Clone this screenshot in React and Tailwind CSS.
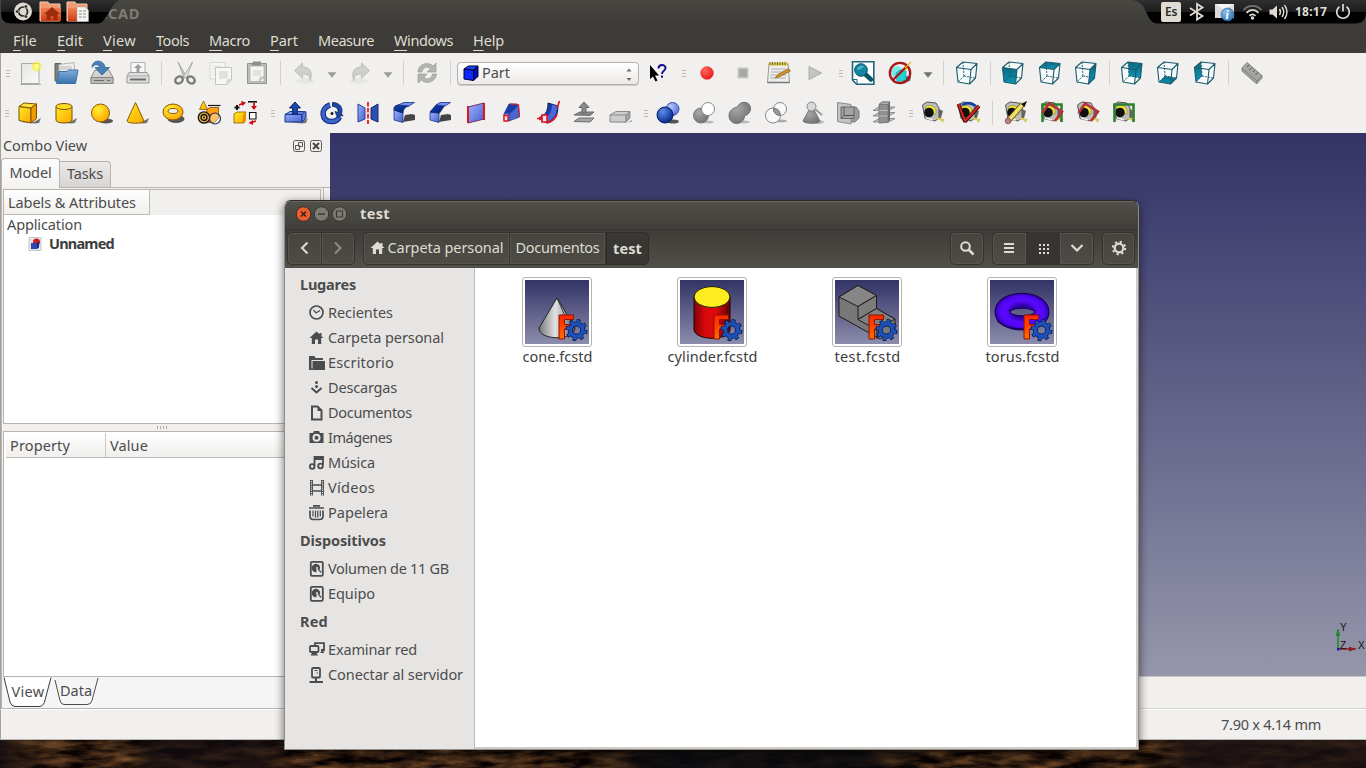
import { useLayoutEffect, useRef } from "react";

/* Text set to a fixed advance width by spreading its letters evenly. */
function Fit({ w, pad = "pb-0.5", className = "", children }) {
  const ref = useRef(null);
  useLayoutEffect(() => {
    const el = ref.current;
    el.style.letterSpacing = "0px";
    const natural = el.getBoundingClientRect().width;
    el.style.letterSpacing = (w - natural) / el.textContent.length + "px";
  }, [w]);
  return (
    <span ref={ref} className={"inline-block shrink-0 whitespace-pre " + pad + " " + className}>
      {children}
    </span>
  );
}

function Svg({ children, s = 24, className = "" }) {
  return (
    <svg width={s} height={s} viewBox={`0 0 ${s} ${s}`} className={"block shrink-0 overflow-visible " + className} fill="none">
      {children}
    </svg>
  );
}

function Defs() {
  const lin = (id, a, b, x2 = 0, y2 = 1) => (
    <linearGradient id={id} x1="0" y1="0" x2={x2} y2={y2}>
      <stop offset="0" stopColor={a} />
      <stop offset="1" stopColor={b} />
    </linearGradient>
  );
  const rad = (id, a, b) => (
    <radialGradient id={id} cx="0.35" cy="0.3" r="0.8">
      <stop offset="0" stopColor={a} />
      <stop offset="1" stopColor={b} />
    </radialGradient>
  );
  return (
    <svg width="0" height="0" className="absolute">
      <defs>
        {lin("yel", "#ffee20", "#ffa400", 1, 1)}
        {lin("blu", "#9db4ff", "#4560cc", 1, 1)}
        {lin("dbl", "#1344b8", "#001c66", 1, 1)}
        {lin("pap", "#e4e4e2", "#fafafa", 1, 1)}
        {lin("teal", "#0a6b84", "#0f93b3")}
        {lin("sky", "#333366", "#8c8cac")}
        {lin("fold", "#7faedb", "#3a72ad")}
        {lin("org", "#f08050", "#cf3c14")}
        {lin("fred", "#ff2400", "#ff6a00")}
        {rad("yb", "#fff030", "#ff9f00")}
        {rad("bb", "#5c8cf0", "#00207a")}
        {rad("lb", "#b8c6ff", "#5068d8")}
        {rad("gb", "#a8a8a8", "#6e6e6e")}
        {rad("rec", "#ff6a5c", "#e60e14")}
        {rad("info", "#8fc0ea", "#2c72b4")}
        <linearGradient id="coneg" x1="0" x2="1" y1="0" y2="0">
          <stop offset="0" stopColor="#777" />
          <stop offset="0.45" stopColor="#e2e2e2" />
          <stop offset="0.65" stopColor="#b8b8b8" />
          <stop offset="1" stopColor="#555" />
        </linearGradient>
        <linearGradient id="cylg" x1="0" x2="1" y1="0" y2="0">
          <stop offset="0" stopColor="#7c0408" />
          <stop offset="0.3" stopColor="#d8080c" />
          <stop offset="0.6" stopColor="#e0080c" />
          <stop offset="1" stopColor="#5c0406" />
        </linearGradient>
        <radialGradient id="tor" cx="0.5" cy="0.5" r="0.5">
          <stop offset="0.3" stopColor="#2c009c" />
          <stop offset="0.6" stopColor="#5a08ff" />
          <stop offset="0.85" stopColor="#5006f0" />
          <stop offset="1" stopColor="#2c009c" />
        </radialGradient>
        <linearGradient id="tray" x1="0" x2="0" y1="0" y2="1">
          <stop offset="0" stopColor="#2f2f2f" />
          <stop offset="0.5" stopColor="#1c1c1c" />
          <stop offset="0.52" stopColor="#000" />
          <stop offset="1" stopColor="#000" />
        </linearGradient>
      </defs>
    </svg>
  );
}

const Shadow = () => <path d="M4 21 H17 L24 17 L22 22 L18 22.5Z" fill="#555" opacity="0.8" />;

/* ---------- first toolbar ---------- */
const NewDoc = () => (
  <Svg>
    <path d="M3.500 2.5H21V22.5H3.500Z" fill="url(#pap)" stroke="#a9a9a6" />
    <path d="M2 23.5H23" stroke="#8a8a88" opacity=".7" />
    <circle cx="18.500" cy="5.5" r="5" fill="#f5ee20" opacity=".6" />
    <circle cx="18.500" cy="5.5" r="2.7" fill="#fff78a" />
  </Svg>
);
const OpenIcon = () => (
  <Svg>
    <path d="M1 2.5H7L8.5 4.5H19V20H1Z" fill="#7d7f7c" stroke="#5f615e" />
    <path d="M5 3.5L20 1.5L21 12H5Z" fill="#eee" stroke="#b5b5b3" />
    <path d="M6 6H18M6 8H18" stroke="#bbb" />
    <path d="M5 10.5H13L14.5 9H24L21.5 22.5H2.5Z" fill="url(#fold)" stroke="#3c6ea5" />
  </Svg>
);
const SaveIcon = () => (
  <Svg>
    <path d="M5 9H19L23 16.5V22.5H1V16.5Z" fill="#d2d2d0" stroke="#8f8f8d" />
    <path d="M1 16.5H23V22.5H1Z" fill="#b9b9b7" stroke="#888886" />
    <path d="M4 19.5H14M17 19.5H20" stroke="#6c6c6a" />
    <path d="M2 6.500C2 -2 14 -2 15 6.500H19.500L12 14L5 6.500H9.500C9 3 4 2.500 2 6.500Z" fill="#4a80b8" stroke="#2d5f96" strokeWidth=".8" />
  </Svg>
);
const PrintIcon = () => (
  <Svg>
    <path d="M5 11V1.5H19V11" fill="#f6f6f6" stroke="#b0b0ae" />
    <path d="M3 11.5H21L23 15V22H1V15Z" fill="#dededc" stroke="#999" />
    <path d="M1.5 15H22.5" stroke="#aaa" />
    <path d="M4 17.5H20V19.500H4Z" fill="#6c6c6a" />
    <path d="M12 3L16 7H13.5V11H10.5V7H8Z" fill="#9c9c9a" />
  </Svg>
);
const CutIcon = () => (
  <Svg>
    <path d="M5 1L13.5 15.5L11 17Z" fill="#c6c6c4" stroke="#999" strokeWidth=".7" />
    <path d="M19.5 1L10.5 15.5L13.5 17Z" fill="#e2e2e0" stroke="#999" strokeWidth=".7" />
    <ellipse cx="6" cy="19" rx="4" ry="3.2" transform="rotate(-35 6 19)" stroke="#7b7b79" strokeWidth="2.4" />
    <ellipse cx="18" cy="19" rx="4" ry="3.2" transform="rotate(35 18 19)" stroke="#7b7b79" strokeWidth="2.4" />
  </Svg>
);
const CopyIcon = () => (
  <Svg>
    <path d="M1 1.5H16V18H1Z" fill="#f6f6f5" stroke="#d4d4d2" />
    <path d="M3.5 5H13M3.5 8H6M3.5 11H6M3.5 14H6" stroke="#dcdcda" />
    <path d="M6.5 6.5H22.5V19L18 23.5H6.5Z" fill="#f6f6f5" stroke="#c4c4c2" />
    <path d="M10 10H19V17L16 18H10Z" fill="#e0e0de" />
    <path d="M17 23.5L18 18.5L23 17.5Z" fill="#d0d0ce" />
  </Svg>
);
const PasteIcon = () => (
  <Svg>
    <path d="M2.5 2.5H21.5V22.5H2.5Z" fill="#bdbdbb" stroke="#939391" />
    <path d="M5 5H19V20.5H5Z" fill="#f4f4f3" stroke="#aaa" strokeWidth=".7" />
    <path d="M8 .5H16V4.5H6.5Z" fill="#8d8d8b" />
    <path d="M8 9H16V15H8Z" fill="#e2e2e0" />
    <path d="M14 21L15 16.5L19.5 15.5Z" fill="#cacac8" stroke="#aaa" strokeWidth=".5" />
  </Svg>
);
const UndoIcon = ({ flip }) => (
  <Svg>
    <g transform={flip ? "translate(24 0) scale(-1 1)" : undefined}>
      <ellipse cx="13" cy="20" rx="9" ry="3" fill="#e6e6e4" />
      <path d="M2.5 9.5L10.5 2V6C17.5 6 21.5 11 18 19.5C18 14.5 15 12.5 10.5 13V17Z" fill="#cfcfcd" stroke="#bdbdbb" />
    </g>
  </Svg>
);
const RefreshIcon = () => (
  <Svg>
    <path d="M3 11C3 3 13 0 18 5L21 2V11H12L15.5 7.5C12 5 8 6 7 11Z" fill="#b4b4b2" stroke="#9c9c9a" strokeWidth=".7" />
    <path d="M21.5 13C21 21 11 24 6.5 19L3 22V13H12L9 16.5C12 19 16.5 18 17.5 13Z" fill="#b4b4b2" stroke="#9c9c9a" strokeWidth=".7" />
  </Svg>
);
const Caret = ({ c = "#9c9c9a" }) => (
  <Svg s={12}><path d="M2 4.5H10L6 9.5Z" fill={c} stroke={c} strokeWidth=".5" /></Svg>
);
const WhatsThis = () => (
  <Svg>
    <path d="M4 4V18L7 15.500L9.500 20.500L11.500 19.500L9 14.500H13Z" fill="#000" />
    <path d="M12.500 7.500C12.500 3 19.500 3 19.500 7C19.500 10 16 9.500 16 13" stroke="#14148c" strokeWidth="2" />
    <path d="M15 14.500H17V16.800H15Z" fill="#14148c" />
  </Svg>
);
const RecIcon = () => <Svg><circle cx="12" cy="12" r="6.500" fill="url(#rec)" stroke="#ee5450" strokeWidth=".5" /></Svg>;
const StopIcon = () => <Svg><path d="M7 7H17V17H7Z" fill="#b8b8b6" stroke="#c9c9c7" /><path d="M8.500 8.500H15.500V15.500H8.500Z" fill="#a6a6a4" /></Svg>;
const NotesIcon = () => (
  <Svg>
    <path d="M2 2.500H21L22.500 21.500H.5Z" fill="#ededeb" stroke="#999" />
    <path d="M2 1.500H21V4.500H2Z" fill="#d4c23c" />
    <path d="M3 1V4M5.500 1V4M8 1V4M10.500 1V4M13 1V4M15.500 1V4M18 1V4" stroke="#7d742c" />
    <path d="M4 8H19M4 11H19M3.500 14H19M3 17H19" stroke="#b0b0ae" />
    <path d="M.5 21.500H22.500" stroke="#777" strokeWidth="1.500" />
    <path d="M21.500 7.500L23.500 10L12 16L8 17L11 13.500Z" fill="#d8912c" stroke="#7a5212" strokeWidth=".6" />
  </Svg>
);
const PlayIcon = () => <Svg><path d="M6 5.500L18.500 12L6 18.500Z" fill="#c4c4c2" stroke="#aaa" /></Svg>;
const ZoomFit = () => (
  <Svg>
    <path d="M1.500 .8H22.800V23.300H5.500L1.500 19Z" fill="#fff" stroke="#1e6478" strokeWidth="1.600" />
    <path d="M1.500 18.500H6V23" stroke="#1e6478" />
    <path d="M14 13L20 18.500" stroke="#0a5468" strokeWidth="4.500" strokeLinecap="round" />
    <circle cx="10" cy="9" r="6.300" fill="#1386a3" stroke="#0a5064" />
    <path d="M6 8.500C7 5 11 4 13 5.500C11 8 8 9 6 8.500Z" fill="#55b4c8" />
  </Svg>
);
const NoDraw = () => (
  <Svg>
    <path d="M13 22L22 20L23 16L19 15Z" fill="#222" opacity=".7" />
    <circle cx="9" cy="11" r="6" fill="#7be8e8" />
    <path d="M8 12L12 9L18 10V19L9 21Z" fill="#20d4d4" stroke="#15898f" strokeWidth=".6" />
    <path d="M14 9L18 4L20 9Z" fill="#e8e020" />
    <circle cx="12" cy="12" r="10.200" stroke="#a8151b" strokeWidth="2.300" />
    <path d="M4.700 19.300L19.300 4.700" stroke="#a8151b" strokeWidth="2.300" />
    <path d="M17 7L23 1" stroke="#e6c020" strokeWidth="1.200" />
  </Svg>
);
const FACES = {
  front: "M1.500 6.500L16 8.500L14.500 23L3 21Z",
  top: "M1.500 6.500L8 1L22 2.500L16 8.500Z",
  right: "M16 8.500L22 2.500L20.500 17L14.500 23Z",
  rear: "M8 1L22 2.500L20.500 17L9 15Z",
  bottom: "M3 21L9 15L20.500 17L14.500 23Z",
  left: "M1.500 6.500L8 1L9 15L3 21Z",
};
const Cube = ({ face }) => (
  <Svg>
    <path d="M1.500 6.500L8 1L22 2.500L20.500 17L14.500 23L3 21Z" fill="#f6fafa" />
    {face && <path d={FACES[face]} fill="url(#teal)" />}
    <path d="M8 1L9 15M9 15L20.500 17M9 15L3 21" stroke="#1c5a6c" strokeWidth=".9" strokeDasharray="2 1" />
    <path d="M1.500 6.500L8 1L22 2.500L20.500 17L14.500 23L3 21ZM1.500 6.500L16 8.500L14.500 23M16 8.500L22 2.500" stroke="#1c5a6c" strokeWidth="1.100" strokeLinejoin="round" />
  </Svg>
);
const Ruler = () => (
  <Svg>
    <path d="M2 7L7 1.500L22 14.500V17L17 22.500L15.500 22L2 10Z" fill="#a4a4a2" stroke="#858583" />
    <path d="M2 7.500L17 20L22 14.500M17 20V22.500" stroke="#777" strokeWidth=".8" />
    <path d="M9 4L7 6M12 6.500L9.500 9M15 9L13 11M18 11.500L15.500 14" stroke="#555" />
  </Svg>
);

/* ---------- second toolbar ---------- */
const Box = () => (
  <Svg>
    <Shadow />
    <path d="M2 5.500L14 7V22L2 19.500Z" fill="url(#yel)" stroke="#7a5200" />
    <path d="M2 5.500L7 2L19.500 3L14 7Z" fill="#ffe03a" stroke="#7a5200" />
    <path d="M14 7L19.500 3V17.500L14 22Z" fill="#ee9a00" stroke="#7a5200" />
  </Svg>
);
const Cylinder = () => (
  <Svg>
    <Shadow />
    <path d="M3 5.500V19C3 23 19 23 19 19V5.500Z" fill="url(#yel)" stroke="#7a5200" />
    <ellipse cx="11" cy="5.500" rx="8" ry="3" fill="#ffdc28" stroke="#7a5200" />
  </Svg>
);
const Sphere = () => (
  <Svg>
    <ellipse cx="17" cy="20" rx="7" ry="2.500" fill="#555" />
    <circle cx="11.500" cy="12" r="9" fill="url(#yb)" stroke="#8a5a00" />
  </Svg>
);
const Cone = () => (
  <Svg>
    <Shadow />
    <path d="M10.500 1.500L2 20C3 23 18 23 19 20Z" fill="url(#yel)" stroke="#8a5a00" />
  </Svg>
);
const Torus = () => (
  <Svg>
    <ellipse cx="15" cy="18" rx="8.500" ry="4" fill="#555" />
    <ellipse cx="12" cy="11" rx="10" ry="8" fill="url(#yb)" stroke="#8a5a00" />
    <ellipse cx="12" cy="10" rx="5" ry="2.500" fill="#f1f0ee" stroke="#8a5a00" />
  </Svg>
);
const Primitives = () => (
  <Svg>
    <path d="M10 8.500L13 6.500H21.500V17L17.500 21.500H8Z" fill="#ff9f10" stroke="#7a5200" strokeWidth=".8" />
    <path d="M6.500 0L2.500 8.500H10.500Z" fill="url(#yel)" stroke="#8a5a00" strokeWidth=".8" />
    <path d="M11 4.500H23.500" stroke="#111" strokeWidth="1.200" />
    <circle cx="7" cy="16.500" r="5.700" stroke="#111" strokeWidth="1.300" fill="#e8b43a" />
    <circle cx="7" cy="16.500" r="3" stroke="#111" strokeWidth="1.300" />
    <circle cx="7" cy="16.500" r=".9" fill="#111" />
    <circle cx="18" cy="17.500" r="5.500" stroke="#222b55" fill="#fff" fillOpacity=".35" strokeWidth="1.200" />
  </Svg>
);
const Builder = () => (
  <Svg>
    <path d="M1 13L4 11H13L11 14V22H1Z" fill="url(#yel)" stroke="#8a5a00" strokeWidth=".8" />
    <path d="M11 14V22L13 20V11Z" fill="#e89400" />
    <path d="M4 4V9M1.500 6.500H6.500" stroke="#111" strokeWidth="2" />
    <path d="M6 4L11 2M21 2V7" stroke="#cf0a14" strokeWidth="1.800" />
    <path d="M8 0L13 1.500L9.500 5ZM18 5H24L21 9Z" fill="#cf0a14" />
    <path d="M15 .8H24" stroke="#111" strokeWidth="1.600" />
    <path d="M16.500 11.500H23V18H16.500Z" stroke="#111" strokeWidth="1.100" fill="#fff" />
    <path d="M23 20L18 21.500" stroke="#cf0a14" strokeWidth="1.800" />
    <path d="M20 19V24L15.500 22Z" fill="#cf0a14" />
  </Svg>
);
const Extrude = () => (
  <Svg>
    <Shadow />
    <path d="M1 13.500L6 10.500H21L18 13.500V21H1Z" fill="url(#blu)" stroke="#16388c" />
    <path d="M1 13.500H18L21 10.500M18 13.500V21L22 17V10.500" fill="#5d78dc" stroke="#16388c" />
    <path d="M11 1L16.500 7H13.300V13H8.700V7H5.500Z" fill="#1a49ae" stroke="#0a1f60" />
  </Svg>
);
const Revolve = () => (
  <Svg>
    <path d="M10 4C0 7 1 21 12 20.500C16 20.500 18.500 18 19.500 16" stroke="#0c2a78" strokeWidth="5.500" />
    <path d="M10 4C0 7 1 21 12 20.500C16 20.500 18 18.500 19 16.500" stroke="#3c64c8" strokeWidth="3.500" />
    <path d="M12.500 1.500C20 1.500 23.500 7 21.500 13L23 14.500L17.500 16L15 10.500L18 11.500C18.500 8 16.500 5.500 12.500 5.500Z" fill="#1c47a4" stroke="#0a1f60" strokeWidth=".8" />
    <circle cx="12" cy="12.500" r="2" fill="#111" stroke="#fff" />
  </Svg>
);
const Mirror = () => (
  <Svg>
    <path d="M2 3L9 7V18L2 21Z" fill="url(#blu)" stroke="#253e96" />
    <path d="M15 7L22 3V21L15 18Z" fill="#2b4fae" stroke="#142a72" />
    <path d="M12 1V23" stroke="#fa1414" strokeWidth="1.800" strokeDasharray="4.500 1.500" />
  </Svg>
);
const Fillet = ({ chamfer }) => (
  <Svg>
    <path d="M11 21L23 19V14L20 13L13 14Z" fill="#444" />
    {chamfer ? (
      <>
        <path d="M2 11.500L11 12V21.500L2 19Z" fill="url(#blu)" stroke="#1a338a" strokeWidth=".8" />
        <path d="M2 11L8 4H17L11.500 12Z" fill="url(#dbl)" stroke="#0a2268" strokeWidth=".8" />
        <path d="M8 4L12 1.500H22.500L17 5Z" fill="#7390ee" stroke="#1a338a" strokeWidth=".8" />
      </>
    ) : (
      <>
        <path d="M2 8.500L11 12V21.500L2 19Z" fill="url(#blu)" stroke="#1a338a" strokeWidth=".8" />
        <path d="M2 9C1.500 6 3 4.500 6 4L17 5C13 6 11.500 8 11 12Z" fill="url(#dbl)" stroke="#0a2268" strokeWidth=".8" />
        <path d="M6 4L12 1.500H22.500L17 5Z" fill="#7390ee" stroke="#1a338a" strokeWidth=".8" />
      </>
    )}
  </Svg>
);
const FaceIcon = () => (
  <Svg>
    <path d="M4 6L20 2V18L4 22Z" fill="url(#blu)" />
    <path d="M4 5V22M20 2V19" stroke="#e3141c" strokeWidth="2" />
    <path d="M4 6L20 2M4 22L20 18" stroke="#7a2a66" />
  </Svg>
);
const Loft = () => (
  <Svg>
    <path d="M4 13L9 3H17L8 14V20L4 19Z" fill="url(#blu)" stroke="#16286e" strokeWidth=".7" />
    <path d="M4 13L9 3L18 4L12 12Z" fill="#1a3ca8" />
    <path d="M9 13L18.500 4L19.500 16L9 20Z" fill="#4a66d4" stroke="#0c1f60" strokeWidth=".6" />
    <path d="M10 3L18.500 3.500L19.500 16" stroke="#e3141c" />
    <path d="M4 14.500H8V20H4Z" stroke="#e3141c" strokeWidth="1.400" fill="#dfe4ff" />
  </Svg>
);
const Sweep = () => (
  <Svg>
    <path d="M12 2L22 5C22 15 18 21 11 22L5 19V15C10 14 12 9 12 2Z" fill="#1a3ca8" stroke="#0c1f60" />
    <path d="M16 3.500L21 5C21 14 17 19 11 20.500V16C14 14 16 9 16 3.500Z" fill="#4869d6" />
    <path d="M23.500 0L21 7M11 22C17 20 20 17 21 13M1 17.500H5" stroke="#e3141c" strokeWidth="1.700" />
    <path d="M6 14H11V21H6Z" stroke="#e3141c" strokeWidth="1.600" fill="#e8e0f0" />
    <path d="M3 15.500L7 17.500L3 19.500Z" fill="#e3141c" />
  </Svg>
);
const Offset = () => (
  <Svg>
    <path d="M2 20.500L7 17H22L18 21Z" fill="#a5a5a5" stroke="#6d6d6d" />
    <path d="M2 14L8 11H22L18 14.500Z" fill="#858585" stroke="#6d6d6d" />
    <path d="M12 1L17 6.500H14V12H10V6.500H7Z" fill="#8b8b8b" stroke="#666" />
  </Svg>
);
const Thickness = () => (
  <Svg>
    <path d="M5 22H18L24 19V21Z" fill="#aaa" />
    <path d="M2 14L8 10.500H22L18 14V21H2Z" fill="#cdcdcd" stroke="#8a8a8a" />
    <path d="M18 14L22 10.500V17L18 21V14" fill="#a3a3a3" stroke="#8a8a8a" />
    <path d="M2 14H18" stroke="#8a8a8a" />
  </Svg>
);
const BooleanOp = () => (
  <Svg>
    <ellipse cx="17" cy="20.500" rx="6" ry="2" fill="#555" />
    <circle cx="16.500" cy="8" r="6.500" fill="url(#lb)" stroke="#3a50b4" />
    <circle cx="9" cy="14" r="8" fill="url(#bb)" stroke="#001c66" />
  </Svg>
);
const CutB = () => (
  <Svg>
    <ellipse cx="16" cy="21" rx="6" ry="1.500" fill="#bbb" />
    <circle cx="9" cy="14.500" r="7.500" fill="url(#gb)" stroke="#777" />
    <circle cx="16" cy="8" r="6.500" fill="#fff" stroke="#888" />
  </Svg>
);
const Union = () => (
  <Svg>
    <ellipse cx="16" cy="21" rx="6" ry="1.500" fill="#bbb" />
    <path d="M9.500 6C12 -1 23 0 22.500 8C22 13 18 14 16.500 15C16 25 1 25 1 14.500C1 10 5 7 9.500 6Z" fill="url(#gb)" stroke="#6e6e6e" />
  </Svg>
);
const Inter = () => (
  <Svg>
    <ellipse cx="17" cy="20" rx="6" ry="1.500" fill="#aaa" />
    <circle cx="9" cy="14.500" r="7.500" fill="#f8f8f8" stroke="#888" />
    <circle cx="16" cy="8" r="6.500" fill="#f8f8f8" stroke="#888" />
    <path d="M9.500 7.500C14 7 17 11 16 14.500C12 14 9.500 12 9.500 7.500Z" fill="#999" stroke="#777" />
  </Svg>
);
const CheckGeo = () => (
  <Svg>
    <ellipse cx="17" cy="21" rx="7" ry="2" fill="#bbb" />
    <path d="M9 9H14L20 20C19 23 4 23 3 20Z" fill="url(#gb)" stroke="#777" />
    <circle cx="11.500" cy="5.500" r="4.500" fill="#d8d8d8" stroke="#888" />
    <path d="M15 8L22 14" stroke="#999" strokeWidth="2" />
  </Svg>
);
const Section = () => (
  <Svg>
    <path d="M12 6L20 6L23 10V17L19 21H12Z" fill="#9a9a9a" stroke="#7c7c7c" />
    <path d="M1.500 1.500L15 3.500V23L1.500 20.500Z" fill="#c4c4c4" stroke="#8c8c8c" />
    <path d="M5 6H18V17.500H5Z" fill="#a4a4a4" stroke="#6a6a6a" />
    <path d="M8 6V14.500L5 17.500M8 14.500H18" stroke="#555" />
  </Svg>
);
const Cross = () => (
  <Svg>
    <path d="M1 9.500L7 6H23L17 9.500ZM1 15L7 11.500H23L17 15ZM1 21L7 17.500H23L17 21Z" fill="#c0c0c0" stroke="#808080" strokeWidth=".8" />
    <path d="M7 3.500L10 1H18L16 3.500V21.500L7 22Z" fill="#909090" stroke="#6e6e6e" strokeWidth=".8" />
    <path d="M7 3.500L10 1H18L16 3.500Z" fill="#b0b0b0" stroke="#6e6e6e" strokeWidth=".8" />
    <path d="M16 3.500L18 1V19L16 21.500Z" fill="#6a6a6a" />
    <path d="M7 9.500H16M7 15H16" stroke="#c4c4c4" strokeWidth=".8" />
  </Svg>
);
const Tape = () => (
  <>
    <path d="M14 6L22 10L20 17L12 19Z" fill="#666" />
    <path d="M1.500 4L6 1L15 2L18 7V17L14 20L4 17.500Z" fill="#bdbdbd" stroke="#555" />
    <path d="M4 7C6 3 13 4 15 9V13H11Z" fill="#f4e830" stroke="#77701a" strokeWidth=".5" />
    <circle cx="8" cy="11.500" r="4.800" fill="#101010" />
    <path d="M5 17L12 19" stroke="#eee" strokeWidth="1.500" />
    <path d="M15 17L22 19L21 21" stroke="#d8c860" strokeWidth="2.200" />
  </>
);
const MeasLin = () => <Svg><Tape /></Svg>;
const MeasAng = () => (
  <Svg>
    <Tape />
    <path d="M5 4C10 1 15 2 19 5" stroke="#173fa0" strokeWidth="2.500" />
    <path d="M1.500 3L8 20.500L22 5" stroke="#3a0808" strokeWidth="3.800" strokeLinejoin="bevel" />
    <path d="M1.500 3L8 20L22 5" stroke="#d42a20" strokeWidth="2" strokeLinejoin="bevel" />
  </Svg>
);
const MeasRef = () => (
  <Svg>
    <Tape />
    <path d="M4 20L19 3" stroke="#5c5014" strokeWidth="5.500" />
    <path d="M4 20L19 3" stroke="#f0e068" strokeWidth="3.800" />
    <path d="M17 3L23 0L20.500 6Z" fill="#111" />
    <circle cx="4" cy="20" r="2.800" fill="#c08080" stroke="#5a3030" strokeWidth=".6" />
  </Svg>
);
const MeasAll = ({ g, r }) => (
  <Svg>
    <Tape />
    {g && <path d="M2.500 21V3.500H21.500V21" stroke="#2c8030" strokeWidth="2.600" />}
    {r && <path d="M2.500 12L9 2.500L22 10.500L15 20" stroke="#b83038" strokeWidth="2.600" />}
  </Svg>
);

const Slot = ({ children }) => <div className="flex w-9 shrink-0 items-center justify-center">{children}</div>;
const Gap1 = () => <div className="w-px shrink-0" />;
const Sep = ({ className = "w-[11px]" }) => (
  <div className={"flex shrink-0 justify-center " + className}>
    <div className="h-6 w-px bg-[#d3d1ce]" />
  </div>
);
const Handle = ({ className = "w-3" }) => (
  <div className={"flex shrink-0 flex-col items-center gap-[2px] " + className}>
    <div className="h-px w-1 bg-[#bdbbb8]" />
    <div className="h-px w-1 bg-[#bdbbb8]" />
    <div className="h-px w-1 bg-[#bdbbb8]" />
  </div>
);
const CaretSlot = ({ c }) => <div className="flex w-5 shrink-0 items-center justify-center pt-0.5"><Caret c={c} /></div>;

const slots = (list) => list.map((C, i) => <Slot key={i}><C /></Slot>);

function Toolbars() {
  return (
    <div className="flex h-20 flex-col border-l border-[#a5a29d] bg-[#f1f0ee]">
      <div className="flex h-10 items-center">
        <Handle className="w-[11px] pl-0.5" />
        {slots([NewDoc, OpenIcon, SaveIcon, PrintIcon])}
        <Sep />
        {slots([CutIcon, CopyIcon, PasteIcon])}
        <Sep />
        <Slot><UndoIcon /></Slot><CaretSlot />
        <Slot><UndoIcon flip /></Slot><CaretSlot />
        <Sep />
        <Slot><RefreshIcon /></Slot>
        <Sep />
        <div className="ml-px flex h-[23px] w-[182px] shrink-0 items-center rounded-[4px] border border-[#b4b0ab] bg-gradient-to-b from-white to-[#eceae8] pl-[5px] pr-1 shadow-[0_1px_0_#cfccc8]">
          <Svg s={16} className="mr-[3px]">
            <path d="M1 4L10.500 5V15.500L1 14Z" fill="#0a28ff" stroke="#00002c" />
            <path d="M1 4L5.500 1H15L10.500 5Z" fill="#1c44ff" stroke="#00002c" />
            <path d="M10.500 5L15 1V11.500L10.500 15.500Z" fill="#0010b4" stroke="#00002c" />
          </Svg>
          <Fit w={28} className="text-[#4c4c4c]">Part</Fit>
          <Svg s={10} className="ml-auto mt-1">
            <path d="M2.500 1.500L5 -1.500L7.500 1.500ZM2.500 8L5 11L7.500 8Z" fill="#6c6a67" />
          </Svg>
        </div>
        <Gap1 />
        <Slot><WhatsThis /></Slot>
        <Handle className="w-[13px] pl-0.5" />
        {slots([RecIcon, StopIcon, NotesIcon, PlayIcon])}
        <Handle className="w-3 pl-1" />
        <Slot><ZoomFit /></Slot>
        <Gap1 />
        <Slot><NoDraw /></Slot>
        <CaretSlot c="#70706e" />
        <Sep />
        <Slot><Cube /></Slot>
        <Sep className="w-2.5" />
        <Slot><Cube face="front" /></Slot>
        <Gap1 />
        <Slot><Cube face="top" /></Slot>
        <Slot><Cube face="right" /></Slot>
        <Sep className="w-2.5" />
        <Slot><Cube face="rear" /></Slot>
        <Slot><Cube face="bottom" /></Slot>
        <Gap1 />
        <Slot><Cube face="left" /></Slot>
        <Sep />
        <Slot><Ruler /></Slot>
      </div>
      <div className="flex h-10 items-center">
        <Handle className="w-[10px] pl-[2px]" />
        {slots([Box, Cylinder, Sphere, Cone, Torus, Primitives, Builder])}
        <Handle className="w-[15px] pl-1" />
        {slots([Extrude, Revolve, Mirror, Fillet])}
        <Slot><Fillet chamfer /></Slot>
        {slots([FaceIcon, Loft, Sweep, Offset, Thickness])}
        <Handle className="w-3 pl-1" />
        {slots([BooleanOp, CutB, Union, Inter, CheckGeo, Section, Cross])}
        <Handle className="w-[13px] pl-1" />
        {slots([MeasLin, MeasAng])}
        <Sep />
        <Slot><MeasRef /></Slot>
        <Slot><MeasAll g r /></Slot>
        <Slot><MeasAll r /></Slot>
        <Slot><MeasAll g /></Slot>
      </div>
    </div>
  );
}

const MENUS = [["File", 24, 1], ["Edit", 26, 1], ["View", 33, 1], ["Tools", 33, 1], ["Macro", 41, 1], ["Part", 28, 1], ["Measure", 56, 0], ["Windows", 59, 1], ["Help", 31, 1]];

function MenuBar() {
  return (
    <div className="flex h-[25px] items-center gap-5 bg-[#3c3b37] pl-[13px] text-[#dfdbd2]">
      {MENUS.map(([t, w, u]) => (
        <Fit key={t} w={w}>
          {u ? <><span className="underline decoration-1 underline-offset-[4px]">{t[0]}</span>{t.slice(1)}</> : t}
        </Fit>
      ))}
    </div>
  );
}

function Dock() {
  return (
    <div className="flex w-[330px] shrink-0 flex-col border-l border-[#a5a29d] bg-[#f1f0ee]">
      <div className="flex h-[25px] items-center pl-[2px] pr-2">
        <Fit w={84}>Combo View</Fit>
        <div className="ml-auto flex gap-[5px]">
          <Svg s={12}>
            <rect x=".5" y=".5" width="11" height="11" rx="2" stroke="#5d5b58" />
            <path d="M5.500 2.500H9.500V6.500H5.500ZM2.500 5.500H6.500V9.500H2.500Z" stroke="#5d5b58" />
          </Svg>
          <Svg s={12}>
            <rect x=".5" y=".5" width="11" height="11" rx="2" stroke="#5d5b58" />
            <path d="M3 3L9 9M9 3L3 9" stroke="#4c4a47" strokeWidth="2" />
          </Svg>
        </div>
      </div>
      <div className="flex h-[30px] items-end border-b border-[#b8b4b0]">
        <div className="mb-[-1px] flex h-[30px] w-[59px] items-center justify-center rounded-t-[4px] border border-b-0 border-[#b8b4b0] bg-gradient-to-b from-[#fcfcfc] to-[#f4f3f2] pb-0.5">
          <Fit w={42}>Model</Fit>
        </div>
        <div className="flex h-[26px] w-[51px] items-center justify-center rounded-tr-[4px] border border-b-0 border-l-0 border-[#b8b4b0] bg-gradient-to-b from-[#ebe9e8] to-[#d8d6d4] pb-0.5">
          <Fit w={36}>Tasks</Fit>
        </div>
      </div>
      <div className="mr-[6px] flex h-[521px] flex-col border-x border-b border-[#b8b4b0] pl-px pr-[2px]">
        <div className="mt-px flex h-[235px] flex-col border border-[#b8b4b0] bg-white">
          <div className="flex h-[25px] bg-[#f1f0ee]">
            <div className="flex w-[146px] items-center border-b border-r border-[#bdbab6] bg-gradient-to-b from-white to-[#f0efed] pl-1 pt-px">
              <Fit w={128}>Labels &amp; Attributes</Fit>
            </div>
          </div>
          <div className="flex h-[19px] items-center pl-[3px]"><Fit w={75}>Application</Fit></div>
          <div className="flex h-[19px] items-center pl-6">
            <Svg s={14} className="mr-[7px]">
              <path d="M1 .5H13V13.500H1Z" fill="#e4e4ea" stroke="#c8c8c8" />
              <circle cx="8.500" cy="5" r="3.500" fill="#cc1c20" />
              <path d="M3 6H9V12H3Z" fill="#2c48b4" /><path d="M9 6L11 4.500V10.500L9 12Z" fill="#182c84" />
            </Svg>
            <Fit w={65} className="font-bold text-[#3c3c3c]">Unnamed</Fit>
          </div>
        </div>
        <div className="flex h-[7px] items-center justify-center gap-[2px]">
          <i className="h-[3px] w-px bg-[#aaa]" /><i className="h-[3px] w-px bg-[#aaa]" /><i className="h-[3px] w-px bg-[#aaa]" /><i className="h-[3px] w-px bg-[#aaa]" />
        </div>
        <div className="flex h-[246px] flex-col border border-[#b8b4b0] bg-white p-px">
          <div className="ml-px flex h-[25px] shrink-0 border-b border-[#bdbab6] bg-gradient-to-b from-white to-[#f0efed]">
            <div className="flex w-[100px] items-center border-r border-[#cbc8c5] pl-1"><Fit w={60} pad="pb-0">Property</Fit></div>
            <div className="flex items-center pl-1"><Fit w={38} pad="pb-0">Value</Fit></div>
          </div>
        </div>
        <div className="flex h-[31px] items-start bg-[#f6f5f5]">
          <div className="grid h-[31px] w-12 place-items-center">
            <svg width="50" height="31" className="col-start-1 row-start-1 block" fill="none">
              <path d="M1 .5L7 25Q8.500 29.500 12 29.500H36Q40 29.500 41.500 25L48 .5" fill="#fff" stroke="#3c3c3c" />
            </svg>
            <Fit w={33} className="z-10 col-start-1 row-start-1 -mt-0.5">View</Fit>
          </div>
          <div className="ml-0.5 grid h-[29px] w-12 place-items-center">
            <svg width="48" height="29" className="col-start-1 row-start-1 block" fill="none">
              <path d="M2 3L7 23.500Q8 27.500 11 27.500H34Q38 27.500 39 23.500L45 1" stroke="#4c4c4c" />
            </svg>
            <Fit w={32} className="z-10 col-start-1 row-start-1 -ml-0.5 -mt-0.5">Data</Fit>
          </div>
        </div>
      </div>
    </div>
  );
}

function FreeCad() {
  return (
    <div className="flex h-[740px] w-[1366px] flex-col border-b border-[#b8b5b0] bg-[#f1f0ee] text-[#4c4c4c]">
      <div className="flex h-7 shrink-0 items-center bg-gradient-to-b from-[#484742] to-[#3c3b37] pl-[74px]">
        <Fit w={66} className="font-bold text-[#7f7c75]">FreeCAD</Fit>
      </div>
      <MenuBar />
      <div className="flex min-h-0 flex-1 flex-col">
        <Toolbars />
        <div className="flex h-[576px]">
          <Dock />
          <div className="flex flex-1 flex-col">
            <div className="flex h-[544px] items-end justify-end border-b border-[#c8c6c4] bg-gradient-to-b from-[#333366] to-[#9696ab]">
              <svg width="36" height="55" fill="none" className="block">
                <path d="M8 28V8" stroke="#1e8a2c" strokeWidth="1.500" />
                <path d="M8 8L5.500 15H10.500Z" fill="#1e8a2c" />
                <path d="M8 28H26" stroke="#8c1e24" strokeWidth="1.500" />
                <path d="M26 28L19 25.500V30.500Z" fill="#8c1e24" />
                <rect x="7" y="27" width="2.500" height="2.500" fill="#1c1cc0" />
                <text x="10" y="10" fontSize="10" fontFamily="Liberation Sans" fill="#111">Y</text>
                <text x="10" y="28" fontSize="10" fontFamily="Liberation Sans" fill="#111">Z</text>
                <text x="28" y="28" fontSize="10" fontFamily="Liberation Sans" fill="#111">X</text>
              </svg>
            </div>
            <div className="flex-1 border-b border-[#d3d1ce] bg-[#f1f0ee]" />
          </div>
        </div>
        <div className="flex flex-1 items-center justify-end border-l border-t border-l-[#a5a29d] border-t-white pr-[45px]">
          <Fit w={100}>7.90 x 4.14 mm</Fit>
        </div>
      </div>
    </div>
  );
}

/* ---------- file manager ---------- */
const K = "#4c4c4c";
const House = ({ c = K }) => <Svg s={16}><path d="M7.500 1.500L.5 8H2.800V14H6V9.500H9V14H12.200V8H14.500L12.500 6.200V3H10.500V4.300Z" fill={c} /></Svg>;
const P = {
  recent: <Svg s={16}><circle cx="7.500" cy="7.500" r="6.500" stroke={K} strokeWidth="1.700" /><path d="M4.500 5L7 8L11 5.500" stroke={K} strokeWidth="1.200" /></Svg>,
  home: <House />,
  desk: <Svg s={16}><path d="M0 1H5.500L6.500 3H14V5H2.500V14.500H0Z" fill={K} /><path d="M3.500 6H16V15H0V13.500H3.500Z" fill={K} /></Svg>,
  down: <Svg s={16}><circle cx="7.500" cy="2.500" r="1.500" fill={K} /><circle cx="7.500" cy="6.500" r="1.500" fill={K} /><path d="M2.500 8L7.500 12.500L12.500 8" stroke={K} strokeWidth="2" /></Svg>,
  doc: <Svg s={16}><path d="M3 1.500H8.500L12.500 5.500V14.500H3Z" stroke={K} strokeWidth="2" /><path d="M8.500 1V6H13Z" fill={K} /></Svg>,
  cam: <Svg s={16}><path fillRule="evenodd" d="M.5 3H4L5 1H10L11 3H14.500V13H.5ZM7.500 3.800A4 4 0 1 0 7.500 11.800A4 4 0 1 0 7.500 3.800Z" fill={K} /><circle cx="7.500" cy="7.800" r="2" fill={K} /></Svg>,
  music: <Svg s={16}><path d="M5.500 11V2H14V10M5.500 4H14" stroke={K} strokeWidth="1.800" /><circle cx="3.200" cy="11.500" r="2.300" stroke={K} strokeWidth="1.800" /><circle cx="11.500" cy="11" r="2.300" stroke={K} strokeWidth="1.800" /></Svg>,
  video: <Svg s={16}><path d="M2.500 0V15.500M13.500 0V15.500" stroke={K} strokeWidth="3" /><path d="M2.500 1V15.500M13.500 1V15.500" stroke="#e7e5e3" strokeWidth="1.200" strokeDasharray="1.200 1" /><path d="M4 5H12M4 11H12" stroke={K} strokeWidth="1.300" /></Svg>,
  trash: <Svg s={16}><path d="M4 .8H11M0 3H15" stroke={K} strokeWidth="1.700" /><path d="M1 5.500V11Q1 14.500 4.500 14.500H10.500Q14 14.500 14 11V5.500" stroke={K} strokeWidth="1.700" /><path d="M4 5.500V11.500M6.500 5.500V12.500M8.800 5.500V12.500M11.300 5.500V11.500" stroke={K} strokeWidth="1.200" /></Svg>,
  disk: <Svg s={16}><rect x="1.800" y=".9" width="12" height="14" rx="1.200" stroke={K} strokeWidth="1.800" /><path d="M8 3A4.200 4.200 0 1 0 7.500 11.200V8H8.500L11.500 12L12.500 10.500L10.500 9A4 4 0 0 0 8 3Z" fill={K} /><circle cx="8" cy="7" r="1" fill="#e7e5e3" /></Svg>,
  net: <Svg s={16}><path d="M6 3.500V1.200H15V8H12" stroke={K} strokeWidth="1.800" /><rect x="1" y="4" width="8.500" height="6" rx="1" stroke={K} strokeWidth="1.800" fill="#e7e5e3" /><path d="M1.500 13.500H9L7.500 11H3ZM11 11H15.500L13.500 8Z" fill={K} /></Svg>,
  server: <Svg s={16}><rect x="3" y="1" width="8" height="9.500" rx="1" stroke={K} strokeWidth="1.800" /><path d="M5.500 3.500H8.500M7.500 6H9" stroke={K} /><path d="M7 11V15M.5 15H14" stroke={K} strokeWidth="2" /></Svg>,
};

const PLACES = [
  ["Lugares", 56, [["recent", "Recientes", 65], ["home", "Carpeta personal", 116], ["desk", "Escritorio", 66], ["down", "Descargas", 69], ["doc", "Documentos", 84], ["cam", "Imágenes", 64], ["music", "Música", 47], ["video", "Vídeos", 47], ["trash", "Papelera", 60]]],
  ["Dispositivos", 86, [["disk", "Volumen de 11 GB", 121], ["disk", "Equipo", 47]]],
  ["Red", 28, [["net", "Examinar red", 89], ["server", "Conectar al servidor", 135]]],
];

function Sidebar() {
  return (
    <div className="w-[190px] shrink-0 border-r border-[#c0bdb9] bg-[#e7e5e3] pt-px">
      {PLACES.map(([h, hw, items]) => (
        <div key={h}>
          <div className="flex h-[31px] items-center pl-[15px]"><Fit w={hw} className="font-bold">{h}</Fit></div>
          {items.map(([ic, t, w]) => (
            <div key={t} className="flex h-[25px] items-center gap-[3px] pl-6">{P[ic]}<Fit w={w}>{t}</Fit></div>
          ))}
        </div>
      ))}
    </div>
  );
}

const Badge = () => (
  <g>
    <path d="M34 35H48.500V39.500H39.500V44.500H46.500V49H39.500V59H34Z" fill="url(#fred)" stroke="#8c1400" strokeWidth="1" />
    <circle cx="51.500" cy="50" r="8.800" stroke="#071c54" strokeWidth="4.500" strokeDasharray="3.455 3.455" />
    <circle cx="51.500" cy="50" r="6.200" stroke="#071c54" strokeWidth="5.200" />
    <circle cx="51.500" cy="50" r="8.600" stroke="#2058c4" strokeWidth="3" strokeDasharray="2.300 4.454" strokeDashoffset="-.55" />
    <circle cx="51.500" cy="50" r="6.200" stroke="#1c50b8" strokeWidth="3.600" />
  </g>
);
const THUMBS = {
  cone: <><path d="M32 18L14 48C14 61 50 61 50 48Z" fill="url(#coneg)" stroke="#222" /><path d="M32 18L40 36" stroke="#222" strokeWidth=".8" /></>,
  cyl: <><path d="M14 17V50C16 61 48 61 50 50V17Z" fill="url(#cylg)" stroke="#1c0404" /><path d="M47 26V50" stroke="#4a0406" strokeWidth=".8" /><ellipse cx="32" cy="17" rx="18" ry="10.500" fill="#ffec20" stroke="#1c1c04" /></>,
  test: (
    <g stroke="#1c1c1c" strokeWidth="1" strokeLinejoin="round">
      <path d="M4 17L23 5.500L41.500 15.500V28.500L60 39V51L45 59L4 36Z" fill="#787878" />
      <path d="M4 17L23 5.500L41.500 15.500L23 26.500Z" fill="#868686" />
      <path d="M23 26.500V39.500L41.500 28.500V15.500Z" fill="#7c7c7c" />
      <path d="M23 39.500L41.500 28.500L60 39L42 50Z" fill="#808080" />
      <path d="M42 50V59" />
    </g>
  ),
  torus: <><path fillRule="evenodd" d="M5 32C5 7 59 7 59 32C59 56 5 56 5 32ZM20 32C22 37 42 37 45 32C42 27 22 27 20 32Z" fill="url(#tor)" stroke="#140050" /><path d="M7 41C18 51 44 51 54 43" stroke="#140050" /><path d="M19 31C24 26 40 26 45 31" stroke="#2a0090" strokeWidth="1.500" /></>,
};

function Files() {
  const files = [["cone", "cone.fcstd", 70], ["cyl", "cylinder.fcstd", 90], ["test", "test.fcstd", 66], ["torus", "torus.fcstd", 74]];
  return (
    <div className="flex flex-1 items-start border-b-2 border-r-2 border-[#d0cdc8] bg-white pl-[4px] pt-[9px]">
      {files.map(([k, t, w]) => (
        <div key={k} className="flex w-[155px] shrink-0 flex-col items-center">
          <div className="size-[70px] rounded-[3px] border border-[#b4b6ae] bg-white p-[2px]">
            <svg width="64" height="64" fill="none" className="block overflow-hidden">
              <rect width="64" height="64" fill="url(#sky)" />
              {THUMBS[k]}
              <Badge />
            </svg>
          </div>
          <Fit w={w} className="ml-0.5 text-[#3c3c3c]">{t}</Fit>
        </div>
      ))}
    </div>
  );
}

const BTN = "flex h-[33px] items-center justify-center border border-[#34332f] bg-gradient-to-b from-[#45443f] to-[#4e4c46] shadow-[inset_0_0_0_1px_#55544e]";
const L = "#dfdbd2";

function FileManager() {
  return (
    <div className="absolute left-[284px] top-[200px] flex h-[550px] w-[855px] flex-col overflow-hidden rounded-t-[7px] border border-[#8f8c87] border-t-[#2c2b28] text-[#4c4c4c] shadow-[0_3px_9px_1px_rgba(0,0,0,0.5)]">
      <div className="flex h-7 shrink-0 items-center gap-[2px] bg-gradient-to-b from-[#51504a] to-[#3f3e39] pb-0.5 pl-[11px] shadow-[inset_0_1px_0_#66645d]">
        <Svg s={16}><circle cx="7.500" cy="8" r="7.300" fill="#ec5e32" stroke="#352f28" /><path d="M5 5.500L10 10.500M10 5.500L5 10.500" stroke="#3b1f14" strokeWidth="1.500" /></Svg>
        <Svg s={16}><circle cx="7.500" cy="8" r="7.300" fill="#7c7a73" stroke="#353430" /><path d="M4 8H11" stroke="#3c3b37" strokeWidth="1.300" /></Svg>
        <Svg s={16}><circle cx="7.500" cy="8" r="7.300" fill="#7c7a73" stroke="#353430" /><path d="M4.500 5H10.500V11H4.500Z" stroke="#3c3b37" strokeWidth="1.200" /></Svg>
        <Fit w={30} className="ml-[10px] font-bold text-[#dfdbd2]">test</Fit>
      </div>
      <div className="flex h-[39px] shrink-0 items-center border-t border-[#383733] bg-gradient-to-b from-[#3d3c38] to-[#504f48] pb-0.5 pl-[2px] pr-[3px] text-[#dfdbd2]">
        <div className={BTN + " w-[34px] rounded-l-[5px] border-r-0"}>
          <Svg s={16}><path d="M10.500 2.500L5 8L10.500 13.500" stroke={L} strokeWidth="2" /></Svg>
        </div>
        <div className={BTN + " w-[34px] rounded-r-[5px]"}>
          <Svg s={16}><path d="M5 2.500L10.500 8L5 13.500" stroke="#8d8a83" strokeWidth="2" /></Svg>
        </div>
        <div className={BTN + " ml-[8px] w-[147px] gap-[2px] rounded-l-[5px]"}>
          <House c={L} /><Fit w={116}>Carpeta personal</Fit>
        </div>
        <div className={BTN + " w-[96px] border-l-0"}><Fit w={84}>Documentos</Fit></div>
        <div className="flex h-[33px] w-[43px] items-center justify-center rounded-r-[5px] border border-[#2e2d2a] bg-[#383733] pt-px"><Fit w={29} className="font-bold">test</Fit></div>
        <div className={BTN + " ml-auto w-[34px] rounded-[5px]"}>
          <Svg s={16}><circle cx="6.500" cy="6.500" r="4.300" stroke={L} strokeWidth="2" /><path d="M9.500 9.500L14.500 14.500" stroke={L} strokeWidth="2.500" /></Svg>
        </div>
        <div className={BTN + " ml-[8px] w-[34px] rounded-l-[5px] border-r-0"}>
          <Svg s={16}><path d="M2 4H12M2 8H12M2 12H12" stroke={L} strokeWidth="2" /></Svg>
        </div>
        <div className="flex h-[33px] w-[34px] items-center justify-center bg-[#363531]">
          <Svg s={16}>{[4, 8, 12].map((y) => <path key={y} d={`M4 ${y + 1}H6M8 ${y + 1}H10M12 ${y + 1}H14`} stroke={L} strokeWidth="2" />)}</Svg>
        </div>
        <div className={BTN + " w-[34px] rounded-r-[5px] border-l-0"}>
          <Svg s={16}><path d="M2.500 5L8 10.500L13.500 5" stroke={L} strokeWidth="2.200" /></Svg>
        </div>
        <div className={BTN + " ml-[8px] w-[33px] rounded-[5px]"}>
          <Svg s={16}><circle cx="8" cy="8" r="4.300" stroke={L} strokeWidth="2.200" /><circle cx="8" cy="8" r="6.200" stroke={L} strokeWidth="2" strokeDasharray="2.200 2.670" /></Svg>
        </div>
      </div>
      <div className="flex min-h-0 flex-1"><Sidebar /><Files /></div>
    </div>
  );
}

/* ---------- panel trays ---------- */
function Trays() {
  return (
    <>
      <div className="absolute left-0 top-0 h-6 w-[120px]">
        <svg width="120" height="24" className="absolute left-0 top-0" fill="none">
          <path d="M1 0H120C112 2 107 19 102 22Q100 23.500 97 23.500H11Q1 23.500 1 13Z" fill="url(#tray)" />
        </svg>
        <div className="relative flex h-6 items-center gap-[7px] pb-0.5 pl-[13px]">
          <Svg s={20}>
            <circle cx="10" cy="10.500" r="9" fill="#dfdbd2" />
            <circle cx="10" cy="10.500" r="4.500" stroke="#222" strokeWidth="1.700" />
            <g fill="#222" stroke="#dfdbd2" strokeWidth=".7"><circle cx="4.200" cy="10.500" r="1.700" /><circle cx="12.900" cy="5.500" r="1.700" /><circle cx="12.900" cy="15.500" r="1.700" /></g>
          </Svg>
          <Svg s={22}>
            <path d="M0 2H8L9 4H20V21H0Z" fill="#ef9a70" stroke="#f2d0bc" /><path d="M1 8H21V21H1Z" fill="url(#org)" />
            <path d="M12 7L4 14H6.500V20H10.500V16H13.500V20H17.500V14H20Z" fill="#9c2c0c" />
          </Svg>
          <Svg s={22} className="-ml-0.5">
            <path d="M0 2H8L9 4H20V21H0Z" fill="#ef9a70" stroke="#f2d0bc" /><path d="M1 8H21V21H1Z" fill="url(#org)" />
            <path d="M10 7H18L21.500 10.500V21.500H10Z" fill="#f4f4f2" stroke="#aaa" strokeWidth=".5" />
            <path d="M12 11H19M12 14H19M12 17H19" stroke="#8c8c8a" strokeDasharray="3 1" />
          </Svg>
        </div>
      </div>
      <div className="absolute right-0 top-0 h-6 w-[236px]">
        <svg width="236" height="24" className="absolute left-0 top-0" fill="none">
          <path d="M0 0H236V12Q236 23.500 225 23.500H27Q21 23.500 17 14C14 6 10 0 0 0Z" fill="url(#tray)" />
        </svg>
        <div className="relative flex h-[23px] items-center pl-[31px] text-[#dfdbd2]">
          <div className="flex h-5 w-5 items-center justify-center rounded-[2px] bg-[#dfdbd2] text-[#2a2a28]"><Fit w={12} pad="pb-0" className="text-[12px] font-semibold">Es</Fit></div>
          <Svg s={16} className="ml-[8px]"><path d="M1 4L13.500 12L8 15.500V0L13.500 3.500L1 11.500" stroke={L} strokeWidth="1.800" /></Svg>
          <Svg s={22} className="ml-[9px]">
            <path d="M1 3H20V17H1Z" fill="#dcdcdc" /><path d="M1 3L10.500 9L20 3Z" fill="#f6f6f6" />
            <circle cx="13.500" cy="13.500" r="6.500" fill="url(#info)" stroke="#2a62a0" strokeWidth=".6" />
            <text x="11.500" y="17.500" fontSize="12" fontWeight="bold" fontStyle="italic" fontFamily="Liberation Serif" fill="#fff">i</text>
          </Svg>
          <Svg s={20} className="ml-[7px]">
            <path d="M.5 8C5.500 2.500 13.500 2.500 18.500 8" stroke="#77746d" strokeWidth="1.800" />
            <path d="M3.500 10.800C7 7 12 7 15.500 10.800M6.500 13.800C8.500 11.800 10.500 11.800 12.500 13.800" stroke={L} strokeWidth="1.800" />
            <circle cx="9.500" cy="16" r="1.700" fill={L} />
          </Svg>
          <Svg s={20} className="ml-[6px]">
            <path d="M.5 7.500H3.500L8 3.500V16.500L3.500 12.500H.5Z" fill={L} />
            <path d="M10.500 7Q12.500 10 10.500 13M13 5Q16.500 10 13 15M15.500 3Q20.500 10 15.500 17" stroke={L} strokeWidth="1.400" />
          </Svg>
          <Fit w={32} pad="pb-0" className="ml-[6px] text-[12px] font-bold">18:17</Fit>
          <Svg s={16} className="ml-[8px]">
            <path d="M4.500 2.700A6.300 6.300 0 1 0 11.500 2.700M8 0V7.500" stroke={L} strokeWidth="1.700" />
          </Svg>
        </div>
      </div>
    </>
  );
}

export default function App() {
  return (
    <div className="relative h-[768px] w-[1366px] overflow-hidden bg-[#0c0a0c] text-[14.5px] leading-[18px]" style={{ fontFamily: '"Noto Sans", "Open Sans", sans-serif' }}>
      <Defs />
      <FreeCad />
      <svg width="1366" height="28" className="block" fill="none">
        <defs>
          <filter id="rock" x="0" y="0" width="100%" height="100%" colorInterpolationFilters="sRGB">
            <feTurbulence type="fractalNoise" baseFrequency="0.03 0.12" numOctaves="5" seed="8" />
            <feColorMatrix values="1 0 0 0 -.27  .68 0 0 0 -.2  .34 0 0 0 -.09  0 0 0 0 1" />
          </filter>
          <linearGradient id="dark" x1="0" x2="1" y1="0" y2="0">
            <stop offset="0" stopColor="#140d10" stopOpacity=".85" />
            <stop offset=".03" stopColor="#1c1008" stopOpacity=".25" />
            <stop offset=".09" stopColor="#1c1008" stopOpacity=".1" />
            <stop offset=".11" stopColor="#140d10" stopOpacity=".75" />
            <stop offset=".19" stopColor="#140d10" stopOpacity=".75" />
            <stop offset=".23" stopColor="#1c1008" stopOpacity=".1" />
            <stop offset=".42" stopColor="#1c1008" stopOpacity=".2" />
            <stop offset=".48" stopColor="#0c0c10" stopOpacity=".9" />
            <stop offset=".63" stopColor="#0c0c10" stopOpacity=".85" />
            <stop offset=".69" stopColor="#1c1008" stopOpacity=".15" />
            <stop offset=".84" stopColor="#1c1008" stopOpacity=".3" />
            <stop offset=".87" stopColor="#1a1012" stopOpacity=".85" />
            <stop offset="1" stopColor="#1a1012" stopOpacity=".8" />
          </linearGradient>
        </defs>
        <rect width="1366" height="28" filter="url(#rock)" />
        <rect width="1366" height="28" fill="url(#dark)" />
      </svg>
      <FileManager />
      <Trays />
    </div>
  );
}
